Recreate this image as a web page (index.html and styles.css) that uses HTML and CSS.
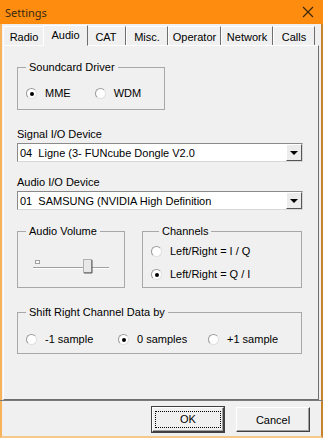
FILE: index.html
```html
<!DOCTYPE html>
<html lang="en">
<head>
    <meta charset="UTF-8">
    <title>Settings</title>
    <link rel="stylesheet" href="styles.css">
</head>
<body>
<div id="window">
    <div id="titlebar">
        <span class="caption">Settings</span>
        <svg class="close" width="12" height="12" viewBox="0 0 12 12">
            <path d="M1 1 L11 11 M11 1 L1 11" stroke="#3c2a10" stroke-width="1.2" fill="none"/>
        </svg>
    </div>
    <div id="tabs">
        <div class="tab">Radio</div>
        <div class="tab active">Audio</div>
        <div class="tab">CAT</div>
        <div class="tab">Misc.</div>
        <div class="tab">Operator</div>
        <div class="tab">Network</div>
        <div class="tab">Calls</div>
    </div>
    <div id="panel">
        <div class="group driver">
            <span class="group-title">Soundcard Driver</span>
            <div class="radio-row">
                <label class="radio checked"><i></i>MME</label>
                <label class="radio"><i></i>WDM</label>
            </div>
        </div>

        <div class="field-label first">Signal I/O Device</div>
        <div class="combo">
            <span class="combo-text">04&nbsp; Ligne (3- FUNcube Dongle V2.0</span>
            <span class="combo-btn"></span>
        </div>

        <div class="field-label">Audio I/O Device</div>
        <div class="combo">
            <span class="combo-text">01&nbsp; SAMSUNG (NVIDIA High Definition</span>
            <span class="combo-btn"></span>
        </div>

        <div class="group-row">
            <div class="group volume">
                <span class="group-title">Audio Volume</span>
                <svg class="slider" width="76" height="18" viewBox="0 0 76 18">
                    <rect x="2.5" y="3.5" width="4" height="3" fill="#fff" stroke="#a0a0a0"/>
                    <line x1="0" y1="10.5" x2="76" y2="10.5" stroke="#a0a0a0"/>
                    <line x1="0" y1="11.5" x2="76" y2="11.5" stroke="#ffffff"/>
                    <rect x="50.5" y="2.5" width="8" height="13" fill="#e8e8e8" stroke="#b0b0b0"/>
                    <line x1="59" y1="3" x2="59" y2="16" stroke="#555"/>
                    <line x1="51" y1="16" x2="59" y2="16" stroke="#555"/>
                </svg>
            </div>
            <div class="group channels">
                <span class="group-title">Channels</span>
                <label class="radio"><i></i>Left/Right = I / Q</label>
                <label class="radio checked"><i></i>Left/Right = Q / I</label>
            </div>
        </div>

        <div class="group shift">
            <span class="group-title">Shift Right Channel Data by</span>
            <div class="radio-row">
                <label class="radio"><i></i>-1 sample</label>
                <label class="radio checked"><i></i>0 samples</label>
                <label class="radio"><i></i>+1 sample</label>
            </div>
        </div>
    </div>
    <div id="footer">
        <button class="btn default"><span>OK</span></button>
        <button class="btn">Cancel</button>
    </div>
</div>
</body>
</html>
```

FILE: styles.css
```css
html, body {
    margin: 0;
    padding: 0;
}
body {
    width: 323px;
    height: 438px;
    overflow: hidden;
    font-family: "Liberation Sans", Arial, sans-serif;
    font-size: 11px;
    color: #000;
}
#window {
    box-sizing: border-box;
    width: 323px;
    height: 438px;
    background: #f0f0f0;
    border-left: 2px solid #f6b35a;
    border-right: 2px solid #c9822c;
    border-bottom: 2px solid #f3c98c;
    display: flex;
    flex-direction: column;
}
#titlebar {
    height: 24px;
    margin: 0 -2px;
    padding: 0 9px 0 5px;
    background: #fe8c0e;
    display: flex;
    align-items: center;
    justify-content: space-between;
}
#titlebar .caption {
    font-family: "Noto Sans", "Liberation Sans", sans-serif;
    font-size: 11px;
    color: #3a2a10;
}
#tabs {
    display: flex;
    align-items: flex-end;
    height: 21px;
    padding-left: 1px;
}
.tab {
    box-sizing: border-box;
    height: 19px;
    padding-top: 4px;
    text-align: center;
    background: #f0f0f0;
    border-top: 1px solid #fff;
    border-left: 1px solid #fff;
    border-right: 1px solid #6e6e6e;
}
.tab:nth-child(1) { width: 42px; }
.tab:nth-child(2) { width: 45px; }
.tab:nth-child(3) { width: 40px; }
.tab:nth-child(4) { width: 42px; }
.tab:nth-child(5) { width: 53px; }
.tab:nth-child(6) { width: 52px; }
.tab:nth-child(7) { width: 42px; }
.tab.active {
    height: 21px;
    padding-top: 3px;
    margin: 0 -2px;
    position: relative;
    z-index: 1;
    border-bottom: 1px solid #f0f0f0;
    margin-bottom: -1px;
}
#panel {
    box-sizing: border-box;
    margin-left: 1px;
    width: 316px;
    height: 355px;
    border-top: 1px solid #fff;
    border-left: 1px solid #fff;
    border-right: 1px solid #6e6e6e;
    border-bottom: 1px solid #6e6e6e;
    padding-left: 13px;
}
#footer {
    flex: 1;
    margin: 0 -2px;
    border-top: 1px solid #7a7a7a;
    display: flex;
    justify-content: flex-end;
    align-items: flex-start;
    padding: 6px 13px 0 0;
    gap: 11px;
}
.group {
    box-sizing: border-box;
    border: 1px solid #a8a8a8;
    position: relative;
}
.group-title {
    display: inline-block;
    background: #f0f0f0;
    padding: 0 3px;
    margin-left: 8px;
    margin-top: -7px;
    line-height: 13px;
    vertical-align: top;
}
.driver {
    margin-top: 21px;
    width: 148px;
    height: 43px;
}
.driver .radio-row {
    display: flex;
    gap: 24px;
    padding: 7px 0 0 8px;
}
.radio {
    display: flex;
    align-items: center;
    line-height: 13px;
    white-space: nowrap;
}
.radio i {
    box-sizing: border-box;
    width: 11px;
    height: 11px;
    border-radius: 50%;
    background: #fff;
    border: 1px solid #9a9a9a;
    border-right-color: #e0e0e0;
    border-bottom-color: #e0e0e0;
    margin-right: 8px;
    display: flex;
    align-items: center;
    justify-content: center;
}
.radio.checked i::after {
    content: "";
    width: 4px;
    height: 4px;
    border-radius: 50%;
    background: #000;
}
.field-label {
    margin-top: 14px;
    line-height: 13px;
}
.field-label.first {
    margin-top: 18px;
}
.combo {
    box-sizing: border-box;
    margin-top: 2px;
    width: 286px;
    height: 19px;
    background: #fff;
    border: 1px solid #8a8a8a;
    border-right-color: #d8d8d8;
    border-bottom-color: #d8d8d8;
    display: flex;
    align-items: center;
    justify-content: space-between;
}
.combo-text {
    padding-left: 2px;
}
.combo-btn {
    box-sizing: border-box;
    width: 16px;
    height: 17px;
    background: #ececec;
    border: 1px solid #fff;
    border-right-color: #555;
    border-bottom-color: #555;
    display: flex;
    align-items: center;
    justify-content: center;
}
.combo-btn::after {
    content: "";
    border-left: 4px solid transparent;
    border-right: 4px solid transparent;
    border-top: 4px solid #000;
}
.group-row {
    display: flex;
    gap: 17px;
    margin-top: 21px;
}
.volume {
    width: 108px;
    height: 57px;
}
.slider {
    display: block;
    margin: 13px 0 0 15px;
}
.channels {
    width: 160px;
    height: 57px;
    padding-left: 8px;
}
.channels .radio {
    margin-top: 1px;
}
.channels .radio + .radio {
    margin-top: 10px;
}
.shift {
    margin-top: 24px;
    width: 285px;
    height: 42px;
}
.shift .radio-row {
    display: flex;
    padding: 8px 0 0 8px;
}
.shift .radio:nth-child(1) { width: 92px; }
.shift .radio:nth-child(2) { width: 90px; }
.btn {
    box-sizing: border-box;
    width: 74px;
    height: 25px;
    font-family: "Liberation Sans", Arial, sans-serif;
    font-size: 11px;
    background: #f0f0f0;
    border: 1px solid #fff;
    border-right-color: #404040;
    border-bottom-color: #404040;
    box-shadow: inset -1px -1px 0 #a0a0a0;
    padding: 0;
}
.btn.default {
    outline: 1px solid #404040;
    outline-offset: 0;
    width: 72px;
    margin-right: 1px;
}
.btn.default span {
    display: block;
    margin: 2px;
    border: 1px dotted #000;
    line-height: 15px;
}
```
